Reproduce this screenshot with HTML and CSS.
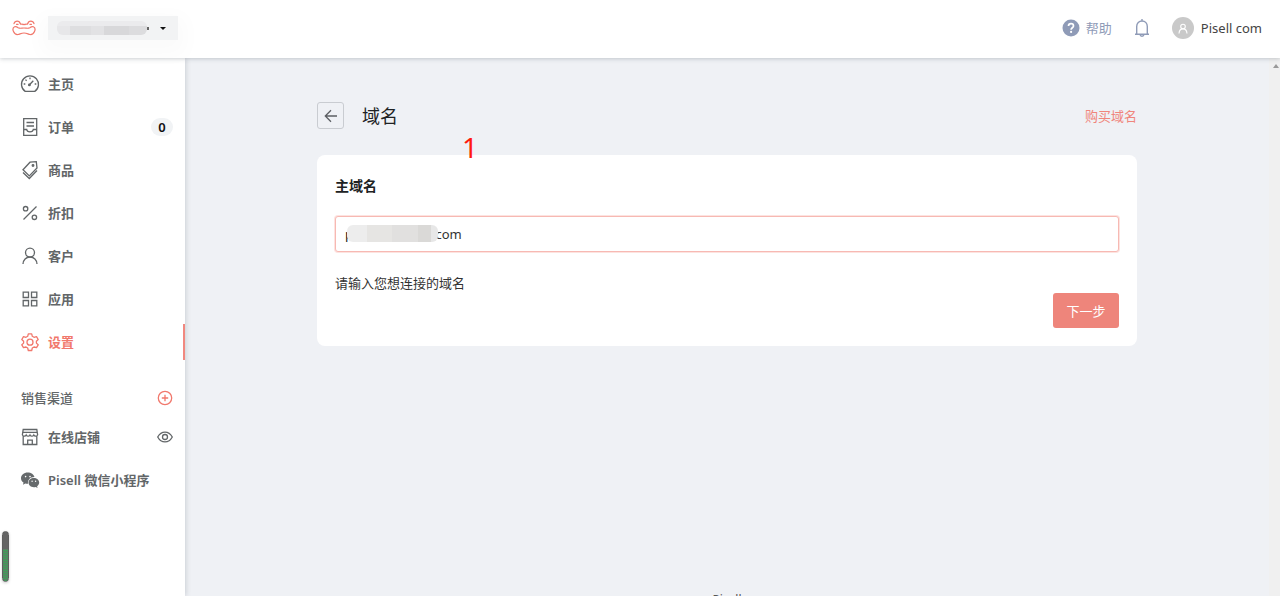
FILE: index.html
```html
<!DOCTYPE html>
<html lang="zh-CN">
<head>
<meta charset="utf-8">
<meta name="viewport" content="width=device-width, initial-scale=1">
<title>域名</title>
<link rel="stylesheet" href="styles.css">
</head>
<body>
<div class="app">
  <header class="topbar">
    <a class="logo" href="#" aria-label="Pisell">
      <svg width="24" height="16" viewBox="0 0 24 16" fill="none" stroke="#f1786c" stroke-width="1.200" stroke-linecap="round" stroke-linejoin="round">
        <path d="M2 3.600C2.600 1.800 3.800 1.200 5.200 1.200S7.800 2 8.200 3.600C9 5 9.800 3.700 10.600 4.200c.6.500 1 .5 1.400 0 .4.500.8.500 1.400 0 .8-.5 1.600.8 2.400-.6.400-1.600 1.600-2.400 3-2.400s2.600.6 3.200 2.400"/>
        <path d="M4.500 4.300h1.600M17.900 4.300h1.600"/>
        <path d="M2.600 6.800c1.600-.8 2.600.2 3.600.9 1.800 1.100 3.500.3 5.800.3s4 .8 5.800-.3c1-.7 2-1.700 3.600-.9 1.900 1 1.900 3 1.100 4.700-.9 2.100-2.400 3.200-4.400 3-2-.3-3.200-1.500-6.100-1.500s-4.100 1.200-6.100 1.500c-2 .2-3.500-.9-4.400-3-.8-1.700-.8-3.700 1.100-4.700Z"/>
      </svg>
    </a>
    <button class="shop" type="button" aria-label="店铺">
      <span class="mask shop-mask"></span><span class="shop-tail"></span><span class="caret"></span>
    </button>
    <div class="tools">
      <a class="help" href="#">
        <svg width="18" height="18" viewBox="0 0 18 18"><circle cx="9" cy="9" r="8.500" fill="#8f9bb7"/><path d="M6.500 7.100C6.500 5.500 7.600 4.700 9 4.700s2.500.8 2.500 2.200c0 1.800-2.400 1.900-2.400 3.800" fill="none" stroke="#fff" stroke-width="1.700"/><circle cx="9.100" cy="12.900" r="1.100" fill="#fff"/></svg>
        <span>帮助</span>
      </a>
      <button class="bell" type="button" aria-label="通知">
        <svg width="16" height="20" viewBox="0 0 16 20" fill="none" stroke="#8f9bb7" stroke-width="1.400"><path d="M8 1v2M2.700 16V8.500C2.700 5.300 5 3 8 3s5.300 2.300 5.300 5.500V16M1 16.200h14M6 16.500c.3 2.300 3.700 2.300 4 0"/></svg>
      </button>
      <a class="user" href="#">
        <span class="avatar"><svg width="12" height="12" viewBox="0 0 12 12" fill="none" stroke="#fff" stroke-width="1.100"><circle cx="6" cy="4.500" r="2.300"/><path d="M2 11.500C2.200 8.800 3.700 6.900 6 6.900s3.800 1.900 4 4.600"/></svg></span>
        <span>Pisell com</span>
      </a>
    </div>
  </header>

  <div class="body">
    <aside class="sidebar">
      <nav class="menu">
        <a class="item" href="#"><svg class="icon" viewBox="0 0 20 20"><path d="M5.200 17.400a8.500 8.500 0 1 1 9.600 0Z"/><path d="M9.500 10.800l3.800-4M10 3.500v1.800M3.700 10h1.600M14.700 10h1.600M5.500 5.600l1.100 1.100"/><circle cx="9.400" cy="10.900" r=".8"/></svg><span>主页</span></a>
        <a class="item" href="#"><svg class="icon" viewBox="0 0 20 20"><path d="M3.700 1.700h13v16.600h-13ZM6.500 5.500h7.500M6.500 9h7.500M3.700 12.500h3c.3 3.200 6.200 3.200 6.600 0h3.400"/></svg><span>订单</span><span class="badge">0</span></a>
        <a class="item" href="#"><svg class="icon" viewBox="0 0 20 20"><path d="M3 9.700L10 2.200l6.300-.5.700 6.200-7.700 8Z"/><path d="M3 12.500l6.300 6 7.700-8"/><circle cx="13" cy="5.500" r=".8"/></svg><span>商品</span></a>
        <a class="item" href="#"><svg class="icon" viewBox="0 0 20 20"><circle cx="5.600" cy="5.700" r="2.200"/><circle cx="14.400" cy="14.300" r="2.200"/><path d="M16.500 3.500l-13 13"/></svg><span>折扣</span></a>
        <a class="item" href="#"><svg class="icon" viewBox="0 0 20 20"><circle cx="10" cy="6.600" r="4.500"/><path d="M3 18c.2-4 3-7 7-7s6.800 3 7 7"/></svg><span>客户</span></a>
        <a class="item" href="#"><svg class="icon" viewBox="0 0 20 20"><path d="M3.200 3.200h5.300v5.300H3.200ZM11.500 3.200h5.300v5.300h-5.300ZM3.200 11.500h5.300v5.300H3.200ZM11.500 11.500h5.300v5.300h-5.300Z"/></svg><span>应用</span></a>
        <a class="item active" href="#" aria-current="page"><svg class="icon" viewBox="0 0 20 20"><path d="M8.300 1.800h3.400l.6 2.500 1.700 1 2.500-.7 1.700 2.900-1.800 1.700v1.900l1.800 1.700-1.700 2.900-2.500-.7-1.700 1-.6 2.500H8.300l-.6-2.500-1.700-1-2.500.7-1.700-2.900 1.800-1.700V9.200L1.800 7.500l1.700-2.900 2.500.7 1.700-1Z" stroke-linejoin="round"/><circle cx="10" cy="10.200" r="3"/></svg><span>设置</span></a>
      </nav>
      <div class="group">
        <span>销售渠道</span>
        <button class="add" type="button" aria-label="添加销售渠道"><svg class="small-icon" viewBox="0 0 16 16"><circle cx="8" cy="8" r="6.700"/><path d="M8 4.800v6.400M4.800 8h6.400"/></svg></button>
      </div>
      <nav class="menu channels">
        <a class="item" href="#"><svg class="icon" viewBox="0 0 20 20"><path d="M3.200 2.500h13.600l.8 5.300c-.5 1.800-3 1.800-3.800.2-.8 1.600-3 1.600-3.800 0-.8 1.600-3 1.600-3.800 0-.8 1.600-3.300 1.600-3.800-.2ZM3 5.300h14M3.200 9v8.500h13.600V9M7.700 17.500v-4.300h4.600v4.300"/></svg><span>在线店铺</span><svg class="small-icon eye" viewBox="0 0 16 16"><path d="M.7 8c3.600-6.600 11-6.600 14.600 0-3.600 6.600-11 6.600-14.600 0Z"/><circle cx="8" cy="8" r="2.500"/></svg></a>
        <a class="item" href="#"><svg class="icon" viewBox="0 0 20 20"><g stroke="none"><path fill="#666a6c" d="M7.700 2.500C3.900 2.500 1 5 1 8.200c0 1.800.9 3.300 2.500 4.400L3 14.700l2.400-1.200c.9.2 1.700.4 2.600.3C7.500 9.900 10.300 7 14.500 7.100 13.900 4.400 11.100 2.500 7.700 2.500Z"/><path fill="#666a6c" d="M19.200 12.600c0-2.600-2.500-4.600-5.400-4.600s-5.300 2-5.300 4.600 2.400 4.700 5.300 4.700c.7 0 1.300-.1 1.900-.3l1.900 1.100-.5-1.800c1.300-.9 2.100-2.200 2.100-3.700Z"/><g fill="#fff"><circle cx="5.600" cy="6.600" r=".8"/><circle cx="10" cy="6.600" r=".8"/><circle cx="12.100" cy="11.200" r=".7"/><circle cx="15.600" cy="11.200" r=".7"/></g></g></svg><span>Pisell 微信小程序</span></a>
      </nav>
      <div class="meter"></div>
    </aside>

    <main class="main">
      <div class="page">
        <div class="page-head">
          <button class="back" type="button" aria-label="返回"><svg width="14" height="14" viewBox="0 0 14 14" fill="none" stroke="#5c5f63" stroke-width="1.300"><path d="M13 7H1.500M7 1.300L1.300 7 7 12.700"/></svg></button>
          <h1>域名</h1>
          <a class="buy" href="#">购买域名</a>
        </div>
        <form class="card">
          <label class="card-title" for="domain">主域名</label>
          <div class="field">
            <input id="domain" type="text" value=".com" aria-describedby="hint">
            <span class="peek">p</span><span class="mask field-mask"></span>
          </div>
          <p class="hint" id="hint">请输入您想连接的域名</p>
          <div class="actions"><button class="next" type="button">下一步</button></div>
        </form>
        <footer class="footer">Pisell</footer>
        <span class="step">1</span>
      </div>
      <div class="scroll"><span class="arrow-up"></span></div>
    </main>
  </div>
</div>
</body>
</html>
```
FILE: styles.css
```css
* { box-sizing: border-box; }
body {
  margin: 0;
  overflow: hidden;
  background: #eff1f5;
  color: #202223;
  font-family: "Noto Sans", "Noto Sans CJK SC", sans-serif;
  font-size: 13px;
  line-height: 20px;
}
a { color: inherit; text-decoration: none; }
button { padding: 0; border: 0; background: none; font: inherit; cursor: pointer; }
svg { display: block; flex: none; }
.app { display: flex; flex-direction: column; height: 100vh; }

.topbar {
  position: relative;
  z-index: 2;
  display: flex;
  flex: none;
  align-items: center;
  height: 58px;
  padding: 0 18px 2px 12px;
  background: #fff;
  box-shadow: 0 1px 4px rgba(60, 70, 85, .25);
}
.shop {
  display: flex;
  align-items: center;
  width: 130px;
  height: 24px;
  margin-left: 12px;
  padding: 0 12px 0 9px;
  background: #f2f3f4;
  box-shadow: 0 8px 20px 8px rgba(0, 0, 0, .02);
}
.mask { border-radius: 6px; }
.shop-mask {
  width: 90px;
  height: 14px;
  background:
    linear-gradient(#ebebed 5px, transparent 5px),
    linear-gradient(90deg, #e7e7e9 14%, #dedee0 14% 38%, #e2e2e4 38% 52%, #d8d8da 52% 80%, #dcdcde 80%);
}
.shop-tail { width: 2px; height: 3px; background: #666; }
.caret {
  margin-left: auto;
  border: 3px solid transparent;
  border-top-color: #111;
  border-bottom: 0;
}
.tools { display: flex; align-items: center; margin-left: auto; }
.help { display: flex; align-items: center; gap: 6px; color: #8f9bb7; }
.bell { margin-left: 22px; }
.user { display: flex; align-items: center; gap: 7px; margin-left: 22px; color: #444; }
.avatar {
  display: grid;
  place-items: center;
  width: 22px;
  height: 22px;
  border-radius: 50%;
  background: #c9c9c9;
}

.body { display: flex; flex: 1; min-height: 0; }
.sidebar {
  position: relative;
  z-index: 1;
  flex: none;
  width: 185px;
  padding-top: 8px;
  background: #fff;
  box-shadow: 1px 0 5px rgba(60, 70, 85, .2);
}
.menu { display: flex; flex-direction: column; gap: 7px; }
.item {
  display: flex;
  align-items: center;
  gap: 8px;
  height: 36px;
  padding: 0 12px 0 20px;
  color: #626668;
  font-weight: 600;
}
.active { padding-right: 10px; border-right: 2px solid #f1887f; color: #f1786c; }
.icon, .small-icon { fill: none; stroke: currentColor; stroke-width: 1.3; }
.icon { width: 20px; height: 20px; }
.small-icon { width: 16px; height: 16px; }
.badge {
  width: 22px;
  height: 18px;
  margin-left: auto;
  border-radius: 9px;
  background: #f1f3f5;
  color: #111;
  line-height: 18px;
  text-align: center;
}
.group {
  display: flex;
  align-items: center;
  justify-content: space-between;
  margin-top: 28px;
  padding: 0 12px 0 21px;
  color: #626668;
  font-weight: 500;
}
.add { color: #f1786c; }
.channels { margin-top: 11px; }
.eye { margin-left: auto; }
.meter {
  position: absolute;
  bottom: 14px;
  left: 2px;
  width: 7px;
  height: 51px;
  border: 1px solid #5e5e5e;
  border-radius: 4px;
  background:
    linear-gradient(#646464 17px, transparent 17px),
    repeating-linear-gradient(#3f9d5a 0 1px, #5b8064 1px 2px);
  box-shadow: 0 1px 3px rgba(0, 0, 0, .2);
}

.main { display: flex; flex: 1; min-width: 0; overflow: hidden; }
.page { position: relative; flex: 1; max-width: 820px; margin: 0 auto; padding-top: 44px; }
.page-head { display: flex; align-items: center; height: 27px; }
.back {
  display: grid;
  place-items: center;
  width: 27px;
  height: 27px;
  border: 1px solid #c9ccd1;
  border-radius: 3px;
}
h1 { margin: 0 0 0 18px; font-size: 18px; font-weight: 400; line-height: 26px; }
.buy { margin-left: auto; color: #f0857c; }
.card {
  margin-top: 26px;
  padding: 20px 18px 18px;
  border-radius: 8px;
  background: #fff;
}
.card-title { display: block; font-size: 14px; font-weight: 700; line-height: 22px; }
.field { position: relative; margin-top: 19px; }
input {
  display: block;
  width: 100%;
  height: 36px;
  padding: 0 9px 0 96px;
  border: 1px solid #f7b9b3;
  border-radius: 3px;
  outline: 0;
  background: #fff;
  box-shadow: 0 0 0 1px #fde3e0;
  color: #333;
  font: inherit;
}
.peek { position: absolute; top: 8px; left: 10px; }
.field-mask {
  position: absolute;
  top: 9px;
  left: 12px;
  width: 91px;
  height: 17px;
  background: linear-gradient(90deg, #ededed 22%, #e6e5e3 22% 50%, #e1e0df 50% 78%, #dad9d7 78% 92%, #e7e7e7 92%);
}
.hint { margin: 21px 0 0; color: #333; }
.actions { display: flex; justify-content: flex-end; }
.next {
  width: 66px;
  height: 35px;
  border-radius: 3px;
  background: #ee857b;
  color: #fff;
}
.footer { margin-top: 244px; color: #555; font-size: 12px; text-align: center; }
.step {
  position: absolute;
  top: 70px;
  left: 145px;
  color: #ff1a0e;
  font-size: 28px;
  line-height: 38px;
}
.scroll { flex: none; width: 11px; padding-top: 6px; background: #f0f0f0; }
.arrow-up {
  display: block;
  width: 0;
  margin-left: 4px;
  border: 3px solid transparent;
  border-top: 0;
  border-bottom: 4px solid #999;
}
```
